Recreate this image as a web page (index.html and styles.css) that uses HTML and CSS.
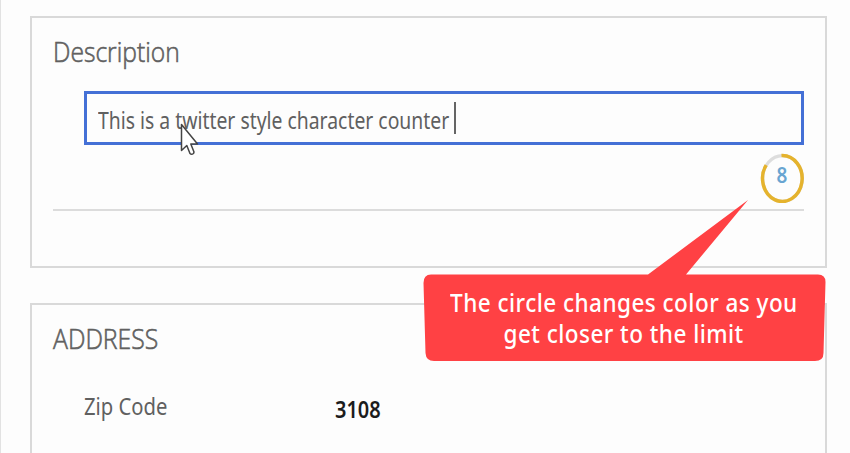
FILE: index.html
```html
<!DOCTYPE html>
<html lang="en">
<head>
<meta charset="utf-8">
<title>Character counter</title>
<link rel="stylesheet" href="styles.css">
</head>
<body>
<main class="form">
  <section class="panel description">
    <h2 class="heading"><span class="label label-description">Description</span></h2>
    <div class="field"><span class="label value">This is a twitter style character counter</span><span class="caret"></span></div>
    <div class="counter">
      <svg class="ring" viewBox="0 0 44 50" width="44" height="50">
        <ellipse cx="22.5" cy="25.5" rx="19.8" ry="22.900" fill="none" stroke="#dddddd" stroke-width="3.2"/>
        <path d="M21.500 2.600 A19.8 22.900 0 1 1 6.2 12.200" fill="none" stroke="#e5b32d" stroke-width="3.500"/>
      </svg>
      <span class="label count">8</span>
    </div>
  </section>
  <section class="panel address">
    <h2 class="heading"><span class="label label-address">ADDRESS</span></h2>
    <div class="row"><span class="key"><span class="label label-zip">Zip Code</span></span><span class="label zip">3108</span></div>
  </section>
</main>
<aside class="callout">
  <svg class="bubble" viewBox="0 0 404 164" width="404" height="164">
    <path d="M8 75.500 H225 L325 1 L263 75.500 H395 Q402.500 75.500 402.500 83 L400.500 154 Q400.500 162 392 162 H11 Q3 162 2.500 154 L0.500 84 Q0.500 75.500 8 75.500Z" fill="#ff4144"/>
  </svg>
  <p class="message"><span class="label line-one">The circle changes color as you</span><span class="label line-two">get closer to the limit</span></p>
</aside>
<svg class="pointer" viewBox="0 0 20 34" width="20" height="34">
  <path d="M1.500 1.500 V27.500 L6.800 22.500 L10 30.500 Q11.500 32 13.500 30.500 L14 29 L10.800 21 H17.500 Z" fill="#fff" stroke="#444" stroke-width="1.500" stroke-linejoin="round"/>
</svg>
</body>
</html>
```
FILE: styles.css
```css
* { box-sizing: border-box; }
body {
  position: relative;
  width: 850px;
  height: 453px;
  margin: 0;
  overflow: hidden;
  background: #fdfdfd;
  color: #606060;
  font-family: "Noto Sans", sans-serif;
}
.form {
  height: 453px;
  padding: 16px 23px 0 29px;
  border-left: 1px solid #e2e2e2;
  overflow: hidden;
}
.panel { border: 2px solid #d9d9d9; }
.description { height: 252px; padding: 14px 21px 0; }
.address { height: 170px; margin-top: 35px; padding: 14px 21px 0; }
.heading {
  height: 38px;
  margin: 0;
  font-family: "Open Sans", sans-serif;
  font-size: 28px;
  font-weight: 300;
  line-height: 38px;
  -webkit-text-stroke: 0.6px #606060;
}
.label {
  display: inline-block;
  white-space: nowrap;
  transform-origin: left center;
}
.label-description { transform: scaleX(0.88); }
.label-address { transform: scaleX(0.885); }
.field {
  display: flex;
  align-items: center;
  height: 54px;
  margin: 21px 0 0 31px;
  padding: 3px 0 0 11px;
  border: 3px solid #4470d6;
  background: #fdfdfd;
  font-size: 23px;
}
.value { width: 356px; transform: scaleX(0.842); }
.caret { width: 2px; height: 32px; margin-top: -3px; background: #656565; }
.counter {
  display: flex;
  justify-content: flex-end;
  height: 66px;
  padding-top: 8px;
  border-bottom: 2px solid #dcdcdc;
}
.ring { display: block; }
.count {
  width: 44px;
  height: 44px;
  margin-left: -44px;
  color: #69a5d1;
  font-size: 21px;
  font-weight: 600;
  line-height: 45px;
  text-align: center;
  transform: scaleX(0.9);
  transform-origin: center;
}
.row { display: flex; align-items: center; margin: 29px 0 0 31px; font-size: 23px; line-height: 34px; }
.key { width: 251px; }
.label-zip { transform: scaleX(0.88); }
.zip { margin-top: 6px; color: #1c1c1c; font-size: 23.500px; font-weight: 600; transform: scaleX(0.85); }
.callout { position: absolute; left: 423px; top: 199px; width: 404px; height: 164px; }
.bubble { display: block; }
.message {
  position: absolute;
  inset: 88px 2px 0 0;
  display: flex;
  flex-direction: column;
  align-items: center;
  margin: 0;
  color: #fff;
  font-size: 24.500px;
  font-weight: 500;
  letter-spacing: 0.5px;
  line-height: 31px;
}
.message .label { transform-origin: center; }
.line-one { transform: scaleX(0.92); }
.line-two { transform: scaleX(0.92); }
.pointer { position: absolute; left: 180px; top: 123px; }
```
